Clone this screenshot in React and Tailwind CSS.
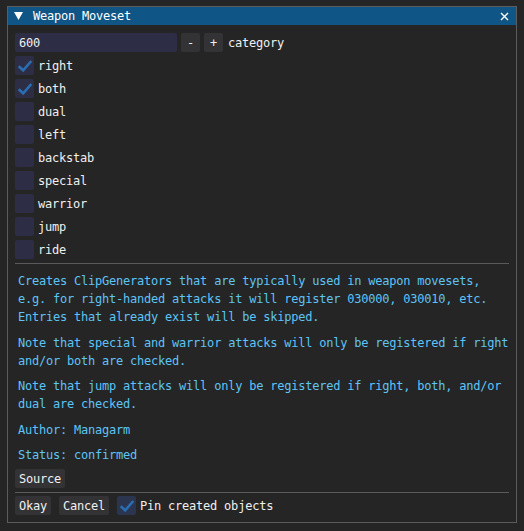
import React from 'react';

const options = [
  { label: 'right', checked: true },
  { label: 'both', checked: true },
  { label: 'dual', checked: false },
  { label: 'left', checked: false },
  { label: 'backstab', checked: false },
  { label: 'special', checked: false },
  { label: 'warrior', checked: false },
  { label: 'jump', checked: false },
  { label: 'ride', checked: false },
];

const Check = () => (
  <svg width="19" height="19" viewBox="0 0 19 19" className="absolute inset-0">
    <path d="M3.7 13.2 L8.2 17.3 L16.3 8" transform="translate(0 -3)" fill="none" stroke="#2a6db1" strokeWidth="2.6" strokeLinejoin="miter" strokeLinecap="butt" />
  </svg>
);

function Checkbox({ checked, label, pin }) {
  return (
    <div className="flex items-center h-[19px]">
      <div className={`relative w-[19px] h-[19px] rounded-[2px] ${pin ? 'bg-[#2b354f]' : 'bg-[#2d2e45]'}`}>
        {checked && <Check />}
      </div>
      <span className="ml-[4px] text-[#f0f0f0]">{label}</span>
    </div>
  );
}

function Button({ children, className = '' }) {
  return (
    <div className={`h-[19px] px-[4px] flex items-center justify-center bg-[#333336] rounded-[2px] text-[#f0f0f0] ${className}`}>
      {children}
    </div>
  );
}

const paragraphs = [
  [
    'Creates ClipGenerators that are typically used in weapon movesets,',
    'e.g. for right-handed attacks it will register 030000, 030010, etc.',
    'Entries that already exist will be skipped.',
  ],
  [
    'Note that special and warrior attacks will only be registered if right',
    'and/or both are checked.',
  ],
  [
    'Note that jump attacks will only be registered if right, both, and/or',
    'dual are checked.',
  ],
  ['Author: Managarm'],
  ['Status: confirmed'],
];

export default function App() {
  return (
    <div
      className="w-[524px] h-[531px] bg-[#252525] pt-[6px] pl-[7px] text-[12px] tracking-[-0.22px] leading-[18px] whitespace-pre"
      style={{ fontFamily: '"DejaVu Sans Mono", "Liberation Mono", monospace' }}
    >
      <div className="w-[510px] h-[517px] border border-[#5c5c5c] bg-[#252525] flex flex-col">
        {/* title bar */}
        <div className="h-[18px] bg-[#0f5585] flex items-center text-white">
          <svg width="9" height="8" viewBox="0 0 9 8" className="ml-[6px]">
            <path d="M0 0 H9 L4.5 8 Z" fill="#ffffff" />
          </svg>
          <span className="ml-[10px]">Weapon Moveset</span>
          <svg width="9" height="9" viewBox="0 0 9 9" className="ml-auto mr-[7px]">
            <path d="M1 1 L8 8 M8 1 L1 8" stroke="#ffffff" strokeWidth="1.4" />
          </svg>
        </div>

        <div className="pl-[7px] pr-[7px] pt-[8px] flex flex-col">
          {/* category input */}
          <div className="flex items-center h-[19px]">
            <div className="w-[162px] h-[19px] bg-[#2d2e45] rounded-[2px] pl-[4px] flex items-center text-[#f0f0f0]">600</div>
            <Button className="ml-[4px] w-[19px] px-0">-</Button>
            <Button className="ml-[4px] w-[19px] px-0">+</Button>
            <span className="ml-[5px] text-[#f0f0f0]">category</span>
          </div>

          <div className="flex flex-col gap-[4px] mt-[4px]">
            {options.map((o) => (
              <Checkbox key={o.label} label={o.label} checked={o.checked} />
            ))}
          </div>

          <div className="h-px bg-[#5a5a5a] mt-[4px] w-[494px]" />

          <div className="flex flex-col gap-[7.5px] mt-[8px] pl-[3px] text-[#5ec4f5]">
            {paragraphs.map((lines, i) => (
              <div key={i} className="flex flex-col">
                {lines.map((l) => (
                  <span key={l}>{l}</span>
                ))}
              </div>
            ))}
          </div>

          <div className="flex mt-[5px]">
            <Button>Source</Button>
          </div>

          <div className="h-px bg-[#5a5a5a] mt-[4px] w-[494px]" />

          <div className="flex items-center mt-[3px] gap-[8px]">
            <Button>Okay</Button>
            <Button>Cancel</Button>
            <Checkbox label="Pin created objects" checked pin />
          </div>
        </div>
      </div>
    </div>
  );
}
